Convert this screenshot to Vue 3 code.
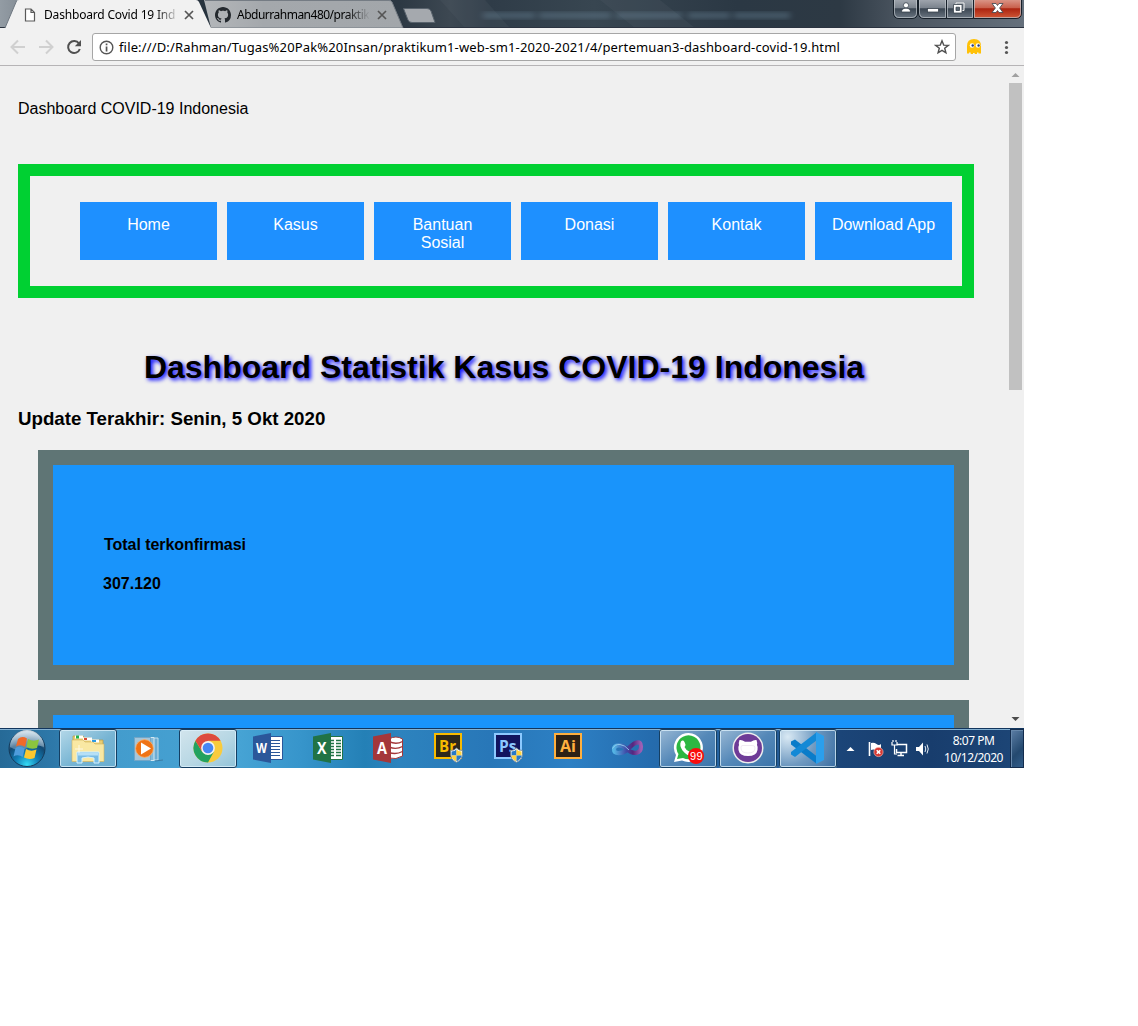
<script setup>
const menu = ['Home', 'Kasus', 'Bantuan Sosial', 'Donasi', 'Kontak', 'Download App']
const cards = [
  { id: 1, label: 'Total terkonfirmasi', value: '307.120' },
  { id: 2, label: '', value: '' },
]
</script>

<template>
  <div class="screen">
    <header class="tabstrip">
      <svg class="frame" width="1024" height="28" viewBox="0 0 1024 28">
        <defs>
          <linearGradient id="glass" x1="0" x2="1" y1="0" y2="0">
            <stop offset="0" stop-color="#939ca4" />
            <stop offset=".03" stop-color="#7d868f" />
            <stop offset=".2" stop-color="#26323d" />
            <stop offset=".39" stop-color="#2c3843" />
            <stop offset=".44" stop-color="#3d4852" />
            <stop offset=".48" stop-color="#2f3c48" />
            <stop offset=".58" stop-color="#384651" />
            <stop offset=".72" stop-color="#2b3844" />
            <stop offset=".82" stop-color="#2d3944" />
            <stop offset=".88" stop-color="#4b5560" />
            <stop offset="1" stop-color="#65707c" />
          </linearGradient>
          <linearGradient id="tabGrey" x1="0" x2="1" y1="0" y2="0">
            <stop offset="0" stop-color="#b4b7ba" />
            <stop offset=".3" stop-color="#a4a8ac" />
            <stop offset="1" stop-color="#a2a6aa" />
          </linearGradient>
          <linearGradient id="ctl" x1="0" x2="0" y1="0" y2="1">
            <stop offset="0" stop-color="#a2a8b0" />
            <stop offset=".45" stop-color="#7b838d" />
            <stop offset=".5" stop-color="#3b4652" />
            <stop offset="1" stop-color="#6c7783" />
          </linearGradient>
          <linearGradient id="ctlRed" x1="0" x2="0" y1="0" y2="1">
            <stop offset="0" stop-color="#dc9a8c" />
            <stop offset=".45" stop-color="#c9604c" />
            <stop offset=".5" stop-color="#ac2410" />
            <stop offset="1" stop-color="#d15a38" />
          </linearGradient>
          <filter id="soft"><feGaussianBlur stdDeviation="3 2" /></filter>
        </defs>
        <rect width="1024" height="28" fill="url(#glass)" />
        <path d="M600 0h60l35 28h-60zM440 0h45l25 28h-45z" fill="#5a6570" opacity=".18" />
        <g filter="url(#soft)" fill="#7391a5" opacity=".33">
          <rect x="483" y="12" width="52" height="7" /><rect x="539" y="12" width="72" height="7" /><rect x="616" y="12" width="66" height="7" /><rect x="688" y="12" width="42" height="7" /><rect x="734" y="12" width="56" height="7" />
        </g>
        <path d="M0 27.5h1024" stroke="#2b3340" />
        <path d="M204 0H389Q391 0 392 2L403 28H211Z" fill="url(#tabGrey)" />
        <path d="M205 .5H389Q391 .5 392 2L403 28H208" fill="none" stroke="#757c84" />
        <path d="M403.500 8.500H427Q430 8.500 431 11L435 22.500H412Q409 22.500 408 20Z" fill="#a5a9ae" stroke="#59636d" />
        <path d="M5 28L16 2Q17 0 19 0H196Q198 0 199 2L211 28Z" fill="#f1f1f1" />
        <path d="M5 28L16.500 1" stroke="#6e7780" fill="none" />
        <g stroke="#17202a">
          <path d="M893.500-1V13Q893.500 18.500 899 18.500H912Q917.500 18.500 917.500 13V-1Z" fill="url(#ctl)" />
          <path d="M918.500-1V13Q918.500 18.500 924 18.500H947V-1Z" fill="url(#ctl)" />
          <path d="M946.500-1V18.500H973.500V-1Z" fill="url(#ctl)" />
          <path d="M973.500-1V18.500H1016Q1021.500 18.500 1021.500 13V-1Z" fill="url(#ctlRed)" />
        </g>
        <g fill="none" stroke="#bfc5cb" stroke-opacity=".7">
          <path d="M894.500 0V13Q895 17.500 899 17.500H912Q916.500 17 916.500 13V0M919.500 0V13Q920 17.500 924 17.500H945.500V0M947.500 0V17.500H972.500V0M974.500 0V17.500H1016Q1020.500 17 1020.500 13V0" />
        </g>
        <g fill="#fff" stroke="#3a444e" stroke-width=".8">
          <circle cx="906" cy="5.300" r="2.600" />
          <path d="M901.500 12Q901.500 8.200 906 8.200T910.500 12Z" />
          <rect x="927.500" y="8.500" width="11" height="3.500" />
          <path d="M956 3h8v7.500h-8z" fill="#68727d" stroke="#f3f3f3" stroke-width="1" />
          <path d="M953.500 4.500h8.500v8.500h-8.500z" fill="#fff" />
          <path d="M956 7.200h3.500v3.300h-3.500z" fill="#596570" />
          <path d="M992 3.500h4l1.500 2 1.500-2h4l-3.400 4.500 3.400 4.500h-4l-1.500-2-1.500 2h-4l3.400-4.500z" />
        </g>
      </svg>
      <div class="tab first">
        <svg width="12" height="14" viewBox="0 0 12 14"><path d="M1.500 1H7L10.500 4.500V13H1.500ZM7 1V4.500H10.500" fill="#fff" stroke="#5a5a5a" stroke-width="1.200" /></svg>
        <span class="title t1">Dashboard Covid 19 Ind</span>
        <svg class="x" width="10" height="10" viewBox="0 0 10 10"><path d="M1 1L9 9M9 1L1 9" stroke="#555" stroke-width="1.700" /></svg>
      </div>
      <div class="tab second">
        <svg width="16" height="16" viewBox="0 0 16 16"><path fill="#24292e" d="M8 0C3.580 0 0 3.580 0 8c0 3.540 2.290 6.530 5.470 7.590.4.070.55-.17.55-.38 0-.19-.01-.82-.01-1.490-2.010.37-2.530-.49-2.690-.94-.09-.23-.48-.94-.82-1.130-.28-.15-.68-.52-.01-.53.63-.01 1.080.58 1.230.82.72 1.210 1.870.87 2.330.66.070-.52.28-.87.51-1.070-1.780-.2-3.640-.89-3.640-3.950 0-.87.31-1.590.82-2.150-.08-.2-.36-1.020.08-2.120 0 0 .67-.21 2.200.82.64-.18 1.320-.27 2-.27s1.360.09 2 .27c1.530-1.040 2.200-.82 2.200-.82.44 1.100.16 1.920.08 2.120.51.56.82 1.270.82 2.150 0 3.070-1.870 3.750-3.650 3.950.29.25.54.73.54 1.480 0 1.070-.01 1.930-.01 2.200 0 .21.15.46.55.38A8.010 8.010 0 0 0 16 8c0-4.420-3.580-8-8-8z" /></svg>
        <span class="title t2">Abdurrahman480/praktik</span>
        <svg class="x" width="10" height="10" viewBox="0 0 10 10"><path d="M1 1L9 9M9 1L1 9" stroke="#555" stroke-width="1.700" /></svg>
      </div>
    </header>

    <div class="toolbar">
      <svg width="84" height="36" viewBox="0 0 84 36" fill="none">
        <path d="M25 19H12M18 12.500L11.500 19L18 25.500M39 19H52M46 12.500L52.500 19L46 25.500" stroke="#d0d0d0" stroke-width="2" />
        <path d="M79 15.500A6 6 0 1 0 79.800 21" stroke="#505050" stroke-width="2" />
        <path d="M81 12V18.200H74.800Z" fill="#505050" />
      </svg>
      <div class="address">
        <svg width="15" height="15" viewBox="0 0 15 15"><circle cx="7.500" cy="7.500" r="6.300" fill="none" stroke="#555" stroke-width="1.400" /><path d="M6.700 3.600h1.700v1.700H6.700zM6.700 6.500h1.700v5H6.700z" fill="#555" /></svg>
        <span class="url">file:///D:/Rahman/Tugas%20Pak%20Insan/praktikum1-web-sm1-2020-2021/4/pertemuan3-dashboard-covid-19.html</span>
        <svg class="star" width="16" height="16" viewBox="0 0 16 16"><path d="M8 1.800L9.700 6.100 14.300 6.400 10.700 9.300 11.900 13.800 8 11.300 4.100 13.800 5.300 9.300 1.700 6.400 6.300 6.100Z" fill="none" stroke="#505050" stroke-width="1.400" /></svg>
      </div>
      <svg class="tools" width="66" height="36" viewBox="0 0 66 36">
        <path d="M11 25.500V18Q11 11 18 11T25 18V25.500H22.500V24.500H21V26H18.700V25H17V26H14.700V24.500H13V25.500Z" fill="#ffc107" />
        <circle cx="16" cy="17.500" r="2.300" fill="#fff" /><circle cx="22" cy="17.500" r="2.300" fill="#fff" />
        <circle cx="16.700" cy="17.500" r="1.200" fill="#243a80" /><circle cx="22.600" cy="17.500" r="1.200" fill="#243a80" />
        <g fill="#555"><circle cx="50.500" cy="14.500" r="1.600" /><circle cx="50.500" cy="19.500" r="1.600" /><circle cx="50.500" cy="24.500" r="1.600" /></g>
      </svg>
    </div>

    <div class="viewport">
      <main class="page">
        <p class="brand">Dashboard COVID-19 Indonesia</p>
        <nav class="menu">
          <a v-for="item in menu" :key="item">{{ item }}</a>
        </nav>
        <h1>Dashboard Statistik Kasus COVID-19 Indonesia</h1>
        <h3>Update Terakhir: Senin, 5 Okt 2020</h3>
        <section v-for="card in cards" :key="card.id" class="card">
          <b class="label">{{ card.label }}</b>
          <b>{{ card.value }}</b>
        </section>
      </main>
      <aside class="scrollbar">
        <svg width="15" height="17" viewBox="0 0 15 17"><path d="M2.500 11L6.500 7L10.500 11Z" fill="#a0a0a0" /></svg>
        <div class="thumb"></div>
        <svg width="15" height="17" viewBox="0 0 15 17"><path d="M2.500 6L6.500 10L10.500 6Z" fill="#4b4b4b" /></svg>
      </aside>
    </div>

    <footer class="taskbar">
      <div class="start">
        <svg width="58" height="40" viewBox="0 0 58 40">
          <defs>
            <radialGradient id="orb" cx=".5" cy=".95" r=".9"><stop offset="0" stop-color="#35dcf5" /><stop offset=".35" stop-color="#1280b8" /><stop offset=".7" stop-color="#124872" /><stop offset="1" stop-color="#a9c5d8" /></radialGradient>
            <linearGradient id="shine" x1="0" x2="0" y1="0" y2="1"><stop offset="0" stop-color="#e1ebf2" stop-opacity=".9" /><stop offset="1" stop-color="#8baac2" stop-opacity=".45" /></linearGradient>
          </defs>
          <circle cx="27" cy="20.500" r="18" fill="url(#orb)" stroke="#153b5b" />
          <path d="M10 19A17 17 0 0 1 44 19Q34 15 27 20Q19 25 10 19Z" fill="url(#shine)" />
          <path d="M18 11Q22 7.500 27 10.500L25 19Q21 16 16 18.500Z" fill="#f06a28" />
          <path d="M28 11Q33 14 39 11.500L37 20Q31 22 26.500 19Z" fill="#8cc63d" />
          <path d="M15.500 20Q20 17.500 24.700 20.500L22.700 29Q18 26 13.500 28.500Z" fill="#4e9cdc" />
          <path d="M26 21Q31 24 36.500 21.500L34.500 30Q29 32 24 29.500Z" fill="#fdc82f" />
        </svg>
      </div>
      <div class="task open">
        <svg width="58" height="40" viewBox="0 0 58 40">
          <path d="M14 8h10l2 2h6l2 2h10v21H14z" fill="#e9cd72" stroke="#b99b47" stroke-width=".7" />
          <path d="M16 7.500h8v3h-8z" fill="#fff" /><path d="M17 7.500h3v3h-3z" fill="#1eb34d" />
          <path d="M24 9.500h9v3h-9z" fill="#fff" /><path d="M25 10h3v2h-3z" fill="#d84a34" />
          <path d="M32 11.500h8v3h-8z" fill="#fff" /><path d="M33 12h4v2h-4z" fill="#299ae4" />
          <path d="M13 12h11l2 2h8l2 2h9v17.500H13z" fill="#f9e8a3" stroke="#d0b45f" stroke-width=".6" />
          <path d="M18 24h22v11h-5v-5q-6-2-12 0v5h-5z" fill="#78bce5" stroke="#d5f2ff" />
          <path d="M19 24.500h20v3H19z" fill="#b6e0f6" />
          <path d="M20 17v8M16 21h8" stroke="#fff" opacity=".7" />
        </svg>
      </div>
      <div class="task">
        <svg width="58" height="40" viewBox="0 0 58 40">
          <path d="M30 10h9v22h-9z" fill="#6cacd3" stroke="#c1ddeb" /><path d="M26 9.500h9v23h-9z" fill="#81b9da" stroke="#d4e8f2" />
          <path d="M15.500 9.500h16v23h-16z" fill="#a3c6dc" stroke="#74a6c6" />
          <path d="M36 33l8-1" stroke="#3d7ba3" />
          <circle cx="25.500" cy="20.500" r="8.900" fill="#ef7315" stroke="#f6b274" stroke-width=".8" /><path d="M22 14.500L32 20.500L22 26.500Z" fill="#fff" />
        </svg>
      </div>
      <div class="task open bright">
        <svg width="58" height="40" viewBox="0 0 58 40">
          <g transform="translate(29 20)">
            <circle r="14.500" fill="#f9cb3d" />
            <path d="M-12.560-7.250A14.500 14.500 0 0 0 0 14.500L6 3.500L0 0L-6 3.500Z" fill="#22a260" />
            <path d="M-12.560-7.250A14.500 14.500 0 0 1 12.560-7.250H0L-6 3.500Z" fill="#dd4b3e" />
            <circle r="6.900" fill="#f2f2f2" /><circle r="5.300" fill="#4687f4" />
          </g>
        </svg>
      </div>
      <div class="task">
        <svg width="58" height="40" viewBox="0 0 58 40">
          <path d="M27 8.500h16.500v23H27z" fill="#fff" stroke="#2b579a" /><path d="M31 12.500h10M31 15.500h10M31 18.500h10M31 21.500h10M31 24.500h10M31 27.500h10" stroke="#2b579a" stroke-width="1.100" />
          <path d="M14 8.500L32 5V35L14 31.500Z" fill="#2b579a" /><text x="17" y="25" class="office" textLength="11" lengthAdjust="spacingAndGlyphs">W</text>
        </svg>
      </div>
      <div class="task">
        <svg width="58" height="40" viewBox="0 0 58 40">
          <path d="M27 8.500h16.500v23H27z" fill="#fff" stroke="#217346" /><path d="M31 12.500h4M37 12.500h5M31 15.500h4M37 15.500h5M31 18.500h4M37 18.500h5M31 21.500h4M37 21.500h5M31 24.500h4M37 24.500h5M31 27.500h4M37 27.500h5" stroke="#217346" stroke-width="1.500" />
          <path d="M14 8.500L32 5V35L14 31.500Z" fill="#217346" /><text x="18" y="25.500" class="office big" textLength="9.500" lengthAdjust="spacingAndGlyphs">X</text>
        </svg>
      </div>
      <div class="task">
        <svg width="58" height="40" viewBox="0 0 58 40">
          <path d="M30 11Q37 7 43.500 11V28Q37 32 30 30Z" fill="#fff" stroke="#a4373a" /><path d="M30 13.500Q37 17 43.500 13.500M30 19Q37 22 43.500 18.500M30 24.500Q37 27 43.500 23.500" fill="none" stroke="#a4373a" stroke-width="1.400" />
          <path d="M14 8.500L32 5V35L14 31.500Z" fill="#a4373a" /><text x="18" y="25.500" class="office big" textLength="10" lengthAdjust="spacingAndGlyphs">A</text>
        </svg>
      </div>
      <div class="task">
        <svg width="58" height="40" viewBox="0 0 58 40">
          <rect x="16" y="6" width="26" height="24" fill="#2d281b" stroke="#f8bb00" stroke-width="2" /><text x="20" y="24" class="adobe" fill="#f8bb00" textLength="17" lengthAdjust="spacingAndGlyphs">Br</text>
          <g transform="translate(30.500 19.500)"><path d="M1 3Q5 3 7 .5Q9 3 13 3V7Q13 12 7 15Q1 12 1 7Z" fill="#fff" stroke="#6b7b85" stroke-width=".8" /><path d="M2 4Q5 4 7 2V8H2Z" fill="#2679c8" /><path d="M7 2Q9 4 12 4V8H7ZM2 8H7V14Q2 11 2 8Z" fill="#ffd23e" /><path d="M7 8H12Q12 11 7 14Z" fill="#2679c8" /></g>
        </svg>
      </div>
      <div class="task">
        <svg width="58" height="40" viewBox="0 0 58 40">
          <rect x="16" y="6" width="26" height="24" fill="#11145e" stroke="#8cc9ff" stroke-width="2" /><text x="20" y="24" class="adobe" fill="#8cc9ff" textLength="17.500" lengthAdjust="spacingAndGlyphs">Ps</text>
          <g transform="translate(30.500 19.500)"><path d="M1 3Q5 3 7 .5Q9 3 13 3V7Q13 12 7 15Q1 12 1 7Z" fill="#fff" stroke="#6b7b85" stroke-width=".8" /><path d="M2 4Q5 4 7 2V8H2Z" fill="#2679c8" /><path d="M7 2Q9 4 12 4V8H7ZM2 8H7V14Q2 11 2 8Z" fill="#ffd23e" /><path d="M7 8H12Q12 11 7 14Z" fill="#2679c8" /></g>
        </svg>
      </div>
      <div class="task">
        <svg width="58" height="40" viewBox="0 0 58 40">
          <rect x="16" y="6" width="26" height="24" fill="#2e2114" stroke="#ffaf3e" stroke-width="2" /><text x="21" y="24" class="adobe" fill="#ffaf3e" textLength="16" lengthAdjust="spacingAndGlyphs">Ai</text>
        </svg>
      </div>
      <div class="task">
        <svg width="58" height="40" viewBox="0 0 58 40" fill="none">
          <defs><linearGradient id="vs" x1="0" x2="1" y1="0" y2="0"><stop offset="0" stop-color="#55b4e4" /><stop offset=".45" stop-color="#3e4ca8" /><stop offset=".7" stop-color="#56267e" /><stop offset="1" stop-color="#9d5fb4" /></linearGradient></defs>
          <path d="M28 21C23 16 15 16 15 21.500C15 26.500 23 26 28 22C35 14 42 11.500 42 18.500C42 26 34 27 28 21Z" stroke="url(#vs)" stroke-width="4.200" />
          <path d="M13.500 20.500Q16 16 21 16.500T30 22" stroke="#9fd8f3" stroke-width=".8" />
        </svg>
      </div>
      <div class="task open dim">
        <svg width="58" height="40" viewBox="0 0 58 40">
          <path d="M15 34L17 27A14.500 14.500 0 1 1 23 32.500Z" fill="#fff" />
          <path d="M18 31L19.500 26A12 12 0 1 1 24 30Z" fill="#2cb742" />
          <path d="M22 13.500Q24 11.500 25.500 14L26.500 16.500Q26.500 18 25.500 19Q27 22.500 31 24Q32.500 22 34 22.500L36.500 24Q37 27 33 28Q28 28 23.500 22.500Q20 17 22 13.500Z" fill="#fff" />
          <circle cx="37" cy="28" r="8" fill="#f90c0c" /><text x="31" y="32" class="badge" textLength="12.500">99</text>
        </svg>
      </div>
      <div class="task open dim">
        <svg width="58" height="40" viewBox="0 0 58 40">
          <circle cx="29" cy="20" r="15.500" fill="#eee" /><circle cx="29" cy="20" r="14" fill="#6e3b97" />
          <path d="M20.500 12Q23 11.500 26 13.800H32Q35 11.500 37.500 12Q38.500 14.500 38 17Q39 18.500 38.500 22Q37.500 28 29 28T19.500 22Q19 18.500 20 17Q19.500 14.500 20.500 12Z" fill="#fff" />
          <path d="M22 19Q22 17 25 17.500H33Q36 17 36 20Q36 25 29 25T22 20Z" fill="#fff" stroke="#e6dbea" stroke-width=".6" />
        </svg>
      </div>
      <div class="task open dim glow">
        <svg width="58" height="40" viewBox="0 0 58 40">
          <path d="M12 13.500L16 11.500L38 28.500V36L12 16.500Z" fill="#0a7cc9" /><path d="M12 26.500L16 29L38 12V4L12 24Z" fill="#1489d6" /><path d="M37 4L45 8V32L37 36Z" fill="#2b9fec" />
        </svg>
      </div>
      <div class="tray">
        <svg width="100" height="40" viewBox="0 0 100 40">
          <path d="M9.500 23L13.500 19L17.500 23Z" fill="#fff" />
          <path d="M32.500 14V28" stroke="#fff" stroke-width="1.600" /><path d="M34 15Q37 14 39.500 16T44 16V23Q41 24 39 22.500T34 22Z" fill="#fff" /><circle cx="41.500" cy="24" r="4.600" fill="#d63731" stroke="#f3b2aa" stroke-width=".7" /><path d="M39.700 22.200L43.300 25.800M43.300 22.200L39.700 25.800" stroke="#fff" stroke-width="1.600" />
          <path d="M60 16.500H69.500V24.500H59.500V21M60.500 27.500H67M64 25V27" fill="none" stroke="#fff" stroke-width="1.500" /><path d="M55 14V17H60V14M57.500 17V26H60M56 12V14M59 12V14" fill="none" stroke="#fff" stroke-width="1.200" />
          <path d="M79 19H82L86 14.500V27.500L82 23H79Z" fill="#fff" /><path d="M88 18Q89.500 21 88 24M90 16.500Q92.500 21 90 25.500" fill="none" stroke="#e6edf5" stroke-width="1" />
        </svg>
        <div class="clock"><span>8:07 PM</span><span>10/12/2020</span></div>
        <div class="peek"></div>
      </div>
    </footer>
  </div>
</template>

<style>
body { background: #fff; }
</style>

<style scoped>
.screen { width: 1024px; height: 768px; overflow: hidden; display: flex; flex-direction: column; background: #f0f0f0; color: #000; font-family: "Liberation Sans", Arial, sans-serif; }
svg { display: block; flex: none; }
.tabstrip { height: 28px; flex: none; position: relative; display: flex; }
.frame { position: absolute; left: 0; top: 0; }
.tab { position: relative; display: flex; align-items: center; height: 28px; padding-top: 2px; box-sizing: border-box; font: 12px/16px "Noto Sans", sans-serif; }
.first { width: 191px; padding-left: 24px; }
.second { width: 220px; padding-left: 24px; }
.title { display: block; flex: none; white-space: nowrap; -webkit-mask-image: linear-gradient(90deg, #000 82%, transparent); mask-image: linear-gradient(90deg, #000 82%, transparent); }
.t1 { width: 136px; margin-left: 8px; letter-spacing: -0.18px; }
.t2 { width: 133px; margin-left: 6px; letter-spacing: -0.5px; }
.first .x { margin-left: 4px; }
.second .x { margin-left: 7px; }

.toolbar { height: 38px; flex: none; display: flex; box-sizing: border-box; border-bottom: 1px solid #b6b4b6; background: #f1f1f1; }
.toolbar > svg:first-child { margin-right: 8px; }
.address { width: 864px; height: 28px; margin-top: 5px; box-sizing: border-box; border: 1px solid #a6a6a6; border-radius: 3px; background: #fff; display: flex; align-items: center; padding: 0 5px 0 6px; }
.url { margin-left: 5px; white-space: nowrap; font: 13px/18px "Noto Sans", sans-serif; letter-spacing: 0.15px; }
.star { margin-left: auto; }

.viewport { height: 662px; flex: none; overflow: hidden; display: flex; }
.page { width: 1009px; flex: none; box-sizing: border-box; padding: 34px 18px 0; }
.brand { margin: 0 0 46px; font-size: 16px; line-height: 18px; }
.menu { width: 956px; height: 134px; box-sizing: border-box; border: 12px solid #00d032; padding: 26px 10px 0 50px; display: flex; gap: 10px; margin-bottom: 51px; }
.menu a { width: 137px; height: 58px; box-sizing: border-box; padding: 14px 15px 0; background: #1e90ff; color: #fff; font-size: 16px; line-height: 18px; text-align: center; }
h1 { margin: 0 1px 22px 0; font-size: 32px; line-height: 37px; text-align: center; text-shadow: 2px 2px 4px blue; white-space: nowrap; }
h3 { margin: 0 0 21px; font-size: 18.720px; line-height: 21px; }
.card { width: 931px; height: 230px; box-sizing: border-box; margin: 0 0 20px 20px; border: 15px solid #5f7575; background: #1994fb; padding: 71px 50px 0; display: flex; flex-direction: column; gap: 21px; font-size: 16px; line-height: 18px; }
.label { margin-left: 1px; letter-spacing: -0.05px; }
.scrollbar { width: 15px; background: #f0f0f0; display: flex; flex-direction: column; }
.thumb { width: 13px; height: 307px; background: #c1c1c1; margin-bottom: 304px; }
.scrollbar svg:last-child { margin-top: 17px; }

.taskbar { height: 40px; flex: none; box-sizing: border-box; display: flex; border-top: 1px solid #12355d; box-shadow: inset 0 1px #84b1d2; background: linear-gradient(90deg, #266a97 0, #2e79aa 55px, #439ccd 115px, #46a3d4 240px, #3795cb 300px, #2480b6 365px, #2d83be 400px, #2877b8 490px, #2d80c4 570px, #256cae 650px, #245b96 780px, #1b4578 840px, #183d6d 930px, #1d4677 1024px); }
.taskbar svg { margin-top: -1px; }
.start { width: 59px; flex: none; }
.task { width: 58px; height: 39px; flex: none; margin-right: 2px; position: relative; }
.open { border-radius: 3px; box-shadow: inset 0 0 0 1px #153f63, inset 0 0 0 2px rgba(222, 242, 252, .75); background: linear-gradient(145deg, #b6d9e9, #76b4d3 55%, #69add0); }
.bright { background: linear-gradient(145deg, #d3e5ed, #b7d7e4 55%, #8fc2d8); }
.dim { background: linear-gradient(145deg, #9ab9d5, #5488b8 50%, #3a73a9); }
.glow { background: radial-gradient(circle at 15% 20%, #d9e9f4, #709ac1 48%, #376ba0); }
.office { fill: #fff; font: bold 14px "Open Sans", sans-serif; }
.big { font-size: 16px; }
.adobe { font: bold 16px "Open Sans", sans-serif; }
.badge { fill: #fff; font: 11px "Liberation Sans", sans-serif; }
.tray { display: flex; width: 187px; margin-left: -2px; flex: none; }
.clock { width: 73px; display: flex; flex-direction: column; align-items: center; padding-top: 3px; color: #fff; font: 12px/17px "Noto Sans", sans-serif; letter-spacing: -0.5px; white-space: nowrap; }
.peek { width: 14px; height: 39px; box-sizing: border-box; border: 1px solid #132c4d; box-shadow: inset 1px 1px #6788ab; background: linear-gradient(135deg, #5c7ea5, #24496f 60%, #325d8a); }
</style>
